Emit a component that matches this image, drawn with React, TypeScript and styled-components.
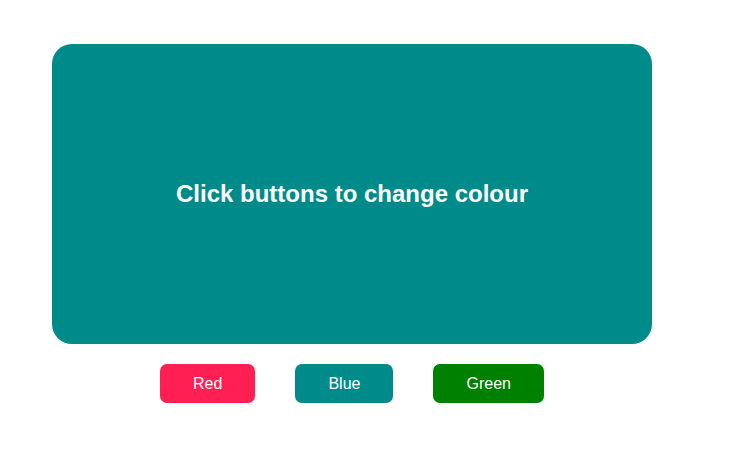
import { useState } from 'react';
import styled, { createGlobalStyle } from 'styled-components';

const GlobalStyle = createGlobalStyle`
  body {
    margin: 0;
    background: #fff;
    font-family: 'Liberation Sans', Arial, sans-serif;
  }
`;

const colours = [
  { label: 'Red', value: '#ff1f53' },
  { label: 'Blue', value: '#008b8b' },
  { label: 'Green', value: '#008000' },
];

const App = () => {
  const [colour, setColour] = useState('#008b8b');

  return (
    <>
      <GlobalStyle />
      <Page>
        <Panel $bg={colour}>
          <Title>Click buttons to change colour</Title>
        </Panel>
        <ButtonRow>
          {colours.map((c) => (
            <ColourButton key={c.label} $bg={c.value} onClick={() => setColour(c.value)}>
              {c.label}
            </ColourButton>
          ))}
        </ButtonRow>
      </Page>
    </>
  );
};

export default App;

const Page = styled.div`
  display: flex;
  flex-direction: column;
  width: 600px;
  padding: 44px 0 0 52px;
  gap: 20px;
`;

const Panel = styled.div<{ $bg: string }>`
  height: 300px;
  border-radius: 20px;
  background-color: ${(p) => p.$bg};
  display: flex;
  align-items: center;
  justify-content: center;
`;

const Title = styled.h1`
  margin: 0;
  color: #fff;
  font-size: 24px;
  font-weight: bold;
`;

const ButtonRow = styled.div`
  display: flex;
  justify-content: center;
  gap: 40px;
`;

const ColourButton = styled.button<{ $bg: string }>`
  font-family: 'Liberation Sans', Arial, sans-serif;
  font-size: 16px;
  line-height: 19px;
  padding: 10px 33px;
  border: none;
  border-radius: 7px;
  background-color: ${(p) => p.$bg};
  color: #fff;
  cursor: pointer;
`;
